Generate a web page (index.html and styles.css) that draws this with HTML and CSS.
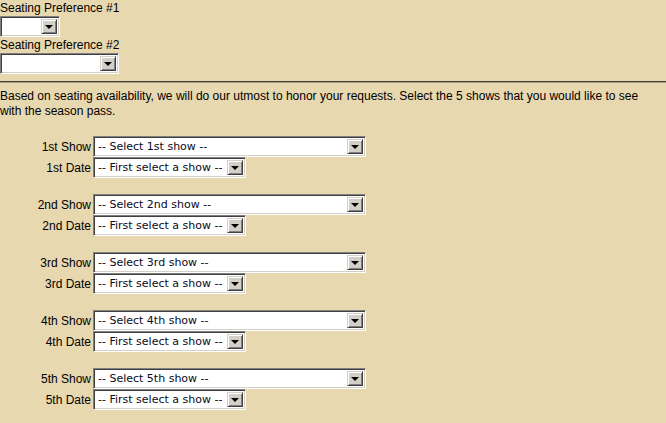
FILE: index.html
```html
<!DOCTYPE html>
<html lang="en">
<head>
  <meta charset="UTF-8">
  <title>Season Pass Shows</title>
  <link rel="stylesheet" href="styles.css">
</head>
<body>

  <div class="prefs">
    <div class="pref-label">Seating Preference #1</div>
    <div class="combo combo-tiny"><span class="combo-text"></span><span class="combo-btn"></span></div>
    <div class="pref-label">Seating Preference #2</div>
    <div class="combo combo-small"><span class="combo-text"></span><span class="combo-btn"></span></div>
  </div>

  <hr class="divider">

  <p class="intro">Based on seating availability, we will do our utmost to honor your requests. Select the 5 shows that you would like to see with the season pass.</p>

  <div class="shows">
    <div class="show-group">
      <div class="row"><span class="row-label">1st Show</span><div class="combo combo-wide"><span class="combo-text">-- Select 1st show --</span><span class="combo-btn"></span></div></div>
      <div class="row"><span class="row-label">1st Date</span><div class="combo combo-date"><span class="combo-text">-- First select a show --</span><span class="combo-btn"></span></div></div>
    </div>
    <div class="show-group">
      <div class="row"><span class="row-label">2nd Show</span><div class="combo combo-wide"><span class="combo-text">-- Select 2nd show --</span><span class="combo-btn"></span></div></div>
      <div class="row"><span class="row-label">2nd Date</span><div class="combo combo-date"><span class="combo-text">-- First select a show --</span><span class="combo-btn"></span></div></div>
    </div>
    <div class="show-group">
      <div class="row"><span class="row-label">3rd Show</span><div class="combo combo-wide"><span class="combo-text">-- Select 3rd show --</span><span class="combo-btn"></span></div></div>
      <div class="row"><span class="row-label">3rd Date</span><div class="combo combo-date"><span class="combo-text">-- First select a show --</span><span class="combo-btn"></span></div></div>
    </div>
    <div class="show-group">
      <div class="row"><span class="row-label">4th Show</span><div class="combo combo-wide"><span class="combo-text">-- Select 4th show --</span><span class="combo-btn"></span></div></div>
      <div class="row"><span class="row-label">4th Date</span><div class="combo combo-date"><span class="combo-text">-- First select a show --</span><span class="combo-btn"></span></div></div>
    </div>
    <div class="show-group">
      <div class="row"><span class="row-label">5th Show</span><div class="combo combo-wide"><span class="combo-text">-- Select 5th show --</span><span class="combo-btn"></span></div></div>
      <div class="row"><span class="row-label">5th Date</span><div class="combo combo-date"><span class="combo-text">-- First select a show --</span><span class="combo-btn"></span></div></div>
    </div>
  </div>

</body>
</html>
```

FILE: styles.css
```css
body {
  margin: 0;
  background-color: #e8d8b0;
  color: #000;
  font-family: "Liberation Sans", Arial, sans-serif;
  font-size: 12px;
}

.pref-label {
  height: 16px;
  line-height: 16px;
}

/* classic windows combo box */
.combo {
  display: flex;
  box-sizing: border-box;
  height: 21px;
  background: #fff;
  border-top: 1px solid #808080;
  border-left: 1px solid #808080;
  border-right: 1px solid #fff;
  border-bottom: 1px solid #fff;
  box-shadow: inset 1px 1px 0 #404040, inset -1px -1px 0 #d4d0c8;
  padding: 2px;
}

.combo-text {
  flex: 1;
  font-family: "DejaVu Sans", Tahoma, sans-serif;
  font-size: 11px;
  line-height: 15px;
  padding-left: 2px;
  color: #0a0a20;
  white-space: nowrap;
  overflow: hidden;
}

.combo-btn {
  position: relative;
  box-sizing: border-box;
  width: 16px;
  height: 15px;
  background: #d4d0c8;
  border-top: 1px solid #d4d0c8;
  border-left: 1px solid #d4d0c8;
  border-right: 1px solid #404040;
  border-bottom: 1px solid #404040;
  box-shadow: inset 1px 1px 0 #fff, inset -1px -1px 0 #808080;
}

.combo-btn::after {
  content: "";
  position: absolute;
  left: 3px;
  top: 5px;
  border-left: 4px solid transparent;
  border-right: 4px solid transparent;
  border-top: 4px solid #000;
}

.combo-tiny {
  width: 60px;
}

.combo-small {
  width: 119px;
}

.combo-wide {
  width: 273px;
}

.combo-date {
  width: 153px;
}

.divider {
  margin: 7px 0 0;
  border: none;
  border-top: 1px solid #404040;
  border-bottom: 1px solid #a89c80;
  height: 0;
}

.intro {
  max-width: 656px;
  margin: 6px 0 0;
  line-height: 15px;
}

.shows {
  padding-top: 17px;
  display: flex;
  flex-direction: column;
  gap: 16px;
}

.row {
  display: flex;
  align-items: center;
}

.row-label {
  width: 91px;
  margin-right: 2px;
  text-align: right;
}
```
